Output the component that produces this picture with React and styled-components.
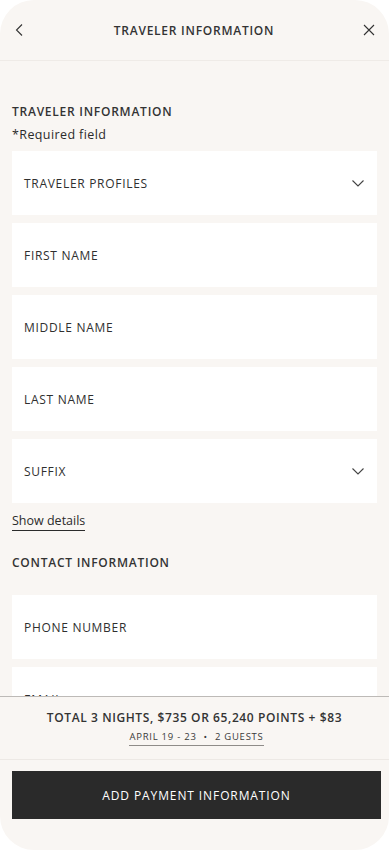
import React from 'react'
import styled, { createGlobalStyle } from 'styled-components'

const Global = createGlobalStyle`
	html, body {
		margin: 0;
		padding: 0;
		background: #ffffff;
	}
	* {
		box-sizing: border-box;
	}
`

const Frame = styled.div`
	width: 389px;
	height: 850px;
	background: #f9f6f3;
	border-radius: 34px;
	overflow: hidden;
	display: flex;
	flex-direction: column;
	font-family: 'Open Sans', 'Noto Sans', sans-serif;
	color: #2b2b2b;
`

const Header = styled.header`
	height: 61px;
	flex-shrink: 0;
	display: flex;
	align-items: center;
	justify-content: space-between;
	padding: 0 10px 0 9px;
	border-bottom: 1px solid #efebe7;
`

const IconButton = styled.button`
	width: 20px;
	height: 20px;
	padding: 0;
	border: none;
	background: none;
	display: flex;
	align-items: center;
	justify-content: center;
	color: #333;
`

const HeaderTitle = styled.h1`
	margin: 0;
	font-size: 12px;
	font-weight: 600;
	letter-spacing: 0.75px;
	color: #333;
`

const Scroll = styled.main`
	flex: 1;
	overflow: hidden;
	padding: 42px 12px 0 12px;
`

const SectionTitle = styled.h2`
	margin: 0;
	font-size: 12px;
	font-weight: 600;
	letter-spacing: 0.75px;
	line-height: 18px;
	color: #333;
`

const Note = styled.p`
	margin: 5px 0 7px;
	font-size: 12.5px;
	letter-spacing: 0.4px;
	line-height: 18px;
`

const Fields = styled.div`
	display: flex;
	flex-direction: column;
	gap: 8px;
	margin-top: ${(p) => p.$top || 0}px;
`

const Field = styled.div`
	height: 64px;
	background: #ffffff;
	display: flex;
	align-items: center;
	justify-content: space-between;
	padding: 0 12px 0 12px;
`

const FieldLabel = styled.span`
	font-size: 12px;
	letter-spacing: 0.7px;
	color: #2f2f2f;
`

const DetailsLink = styled.a`
	display: inline-block;
	margin-top: 8px;
	font-size: 12.5px;
	line-height: 19px;
	color: #2b2b2b;
	border-bottom: 1px solid #2b2b2b;
	text-decoration: none;
`

const ContactTitle = styled(SectionTitle)`
	margin-top: 23px;
`

const Footer = styled.footer`
	flex-shrink: 0;
	border-top: 1px solid #bdbab7;
`

const Summary = styled.div`
	display: flex;
	flex-direction: column;
	align-items: center;
	padding: 12px 0 13px;
	border-bottom: 1px solid #ede9e5;
`

const Total = styled.div`
	font-size: 12px;
	font-weight: 600;
	letter-spacing: 0.6px;
	line-height: 18px;
	color: #333;
`

const Dates = styled.div`
	margin-top: 3px;
	font-size: 9.5px;
	letter-spacing: 0.75px;
	line-height: 14px;
	color: #3a3a3a;
	border-bottom: 1px solid #8f8c89;
	padding-bottom: 1px;
	transform: translateX(2px);
`

const Dot = styled.span`
	margin: 0 7px;
`

const ButtonWrap = styled.div`
	padding: 11px 8px 31px 12px;
`

const PayButton = styled.button`
	width: 100%;
	height: 48px;
	border: none;
	background: #2a2a2a;
	color: #ffffff;
	font-family: inherit;
	font-size: 12px;
	font-weight: 500;
	letter-spacing: 0.9px;
`

const Chevron = () => (
	<svg width="14" height="14" viewBox="0 0 14 14" fill="none">
		<path d="M1.5 4.5 L7 10 L12.5 4.5" stroke="#444" strokeWidth="1.1" />
	</svg>
)

const Back = () => (
	<svg width="12" height="14" viewBox="0 0 12 14" fill="none">
		<path d="M9 1.5 L3.5 7 L9 12.5" stroke="#333" strokeWidth="1.1" />
	</svg>
)

const Close = () => (
	<svg width="14" height="14" viewBox="0 0 14 14" fill="none">
		<path d="M2 2 L12 12 M12 2 L2 12" stroke="#333" strokeWidth="1.1" />
	</svg>
)

const travelerFields = [
	{ label: 'TRAVELER PROFILES', select: true },
	{ label: 'FIRST NAME' },
	{ label: 'MIDDLE NAME' },
	{ label: 'LAST NAME' },
	{ label: 'SUFFIX', select: true },
]

const contactFields = [{ label: 'PHONE NUMBER' }, { label: 'EMAIL' }]

const FieldList = ({ items, top }) => (
	<Fields $top={top}>
		{items.map((f) => (
			<Field key={f.label}>
				<FieldLabel>{f.label}</FieldLabel>
				{f.select && <Chevron />}
			</Field>
		))}
	</Fields>
)

export default function App() {
	return (
		<>
			<Global />
			<Frame>
				<Header>
					<IconButton aria-label="Back">
						<Back />
					</IconButton>
					<HeaderTitle>TRAVELER INFORMATION</HeaderTitle>
					<IconButton aria-label="Close">
						<Close />
					</IconButton>
				</Header>
				<Scroll>
					<SectionTitle>TRAVELER INFORMATION</SectionTitle>
					<Note>*Required field</Note>
					<FieldList items={travelerFields} />
					<DetailsLink href="#">Show details</DetailsLink>
					<ContactTitle>CONTACT INFORMATION</ContactTitle>
					<FieldList items={contactFields} top={23} />
				</Scroll>
				<Footer>
					<Summary>
						<Total>TOTAL 3 NIGHTS, $735 OR 65,240 POINTS + $83</Total>
						<Dates>
							APRIL 19 - 23<Dot>•</Dot>2 GUESTS
						</Dates>
					</Summary>
					<ButtonWrap>
						<PayButton>ADD PAYMENT INFORMATION</PayButton>
					</ButtonWrap>
				</Footer>
			</Frame>
		</>
	)
}
